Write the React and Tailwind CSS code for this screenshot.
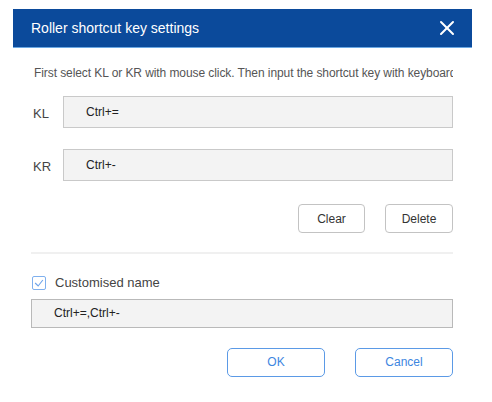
import { X } from 'lucide-react';

const KeyRow = ({ label, value, className = '' }) => (
  <div className={`flex items-center ${className}`}>
    <span className="w-[32px] pl-[2px] pt-[3px] text-[13px] text-[#444]">{label}</span>
    <div className="flex-1 h-[32px] bg-[#f3f3f3] border border-[#c9c9c9] flex items-center pl-[22px] text-[12px] text-[#222]">
      {value}
    </div>
  </div>
);

const App = () => {
  return (
    <div className="w-[492px] h-[402px] bg-white pt-[9px] pl-[13px] font-['Liberation_Sans',Arial,sans-serif]">
      <div className="w-[459px]">
        <div className="h-[39px] bg-[#0b4a9b] border-b border-[#6aa8e4] flex items-center justify-between pl-[18px] pr-[13px]">
          <span className="text-[14px] text-white">Roller shortcut key settings</span>
          <X className="w-[24px] h-[24px] text-white" strokeWidth={2} />
        </div>
        <div className="pl-[18px] pr-[19px]">
          <div className="mt-[17px] pl-[3px] h-[16px] leading-[16px] text-[12px] tracking-[-0.08px] text-[#555] whitespace-nowrap overflow-hidden">
            First select KL or KR with mouse click. Then input the shortcut key with keyboard
          </div>
          <KeyRow label="KL" value="Ctrl+=" className="mt-[15px]" />
          <KeyRow label="KR" value="Ctrl+-" className="mt-[21px]" />
          <div className="flex justify-end gap-[20px] mt-[23px]">
            <button className="w-[67px] h-[29px] rounded-[4px] border border-[#c3c3c3] bg-white text-[12px] text-[#333]">Clear</button>
            <button className="w-[68px] h-[29px] rounded-[4px] border border-[#c3c3c3] bg-white text-[12px] text-[#333]">Delete</button>
          </div>
          <div className="mt-[19px] h-[2px] bg-[#f0f0f0]" />
          <div className="flex items-center mt-[19px] pl-[1px]">
            <span className="w-[14px] h-[14px] border border-[#7fb0ee] rounded-[2px] flex items-center justify-center">
              <svg viewBox="0 0 14 14" className="w-[12px] h-[12px]">
                <path d="M2.5 7 L6 10.5 L11.5 3.5" fill="none" stroke="#6ea4ea" strokeWidth="1.3" />
              </svg>
            </span>
            <span className="ml-[9px] text-[13px] text-[#444]">Customised name</span>
          </div>
          <div className="mt-[6px] h-[29px] bg-[#f3f3f3] border border-[#b9b9b9] flex items-center pl-[22px] text-[12px] text-[#222]">
            Ctrl+=,Ctrl+-
          </div>
          <div className="flex justify-end gap-[30px] mt-[20px]">
            <button className="w-[98px] h-[29px] rounded-[5px] border border-[#5b9ae6] bg-white text-[12px] text-[#3d86df]">OK</button>
            <button className="w-[98px] h-[29px] rounded-[5px] border border-[#5b9ae6] bg-white text-[12px] text-[#3d86df]">Cancel</button>
          </div>
        </div>
      </div>
    </div>
  );
};

export default App;
